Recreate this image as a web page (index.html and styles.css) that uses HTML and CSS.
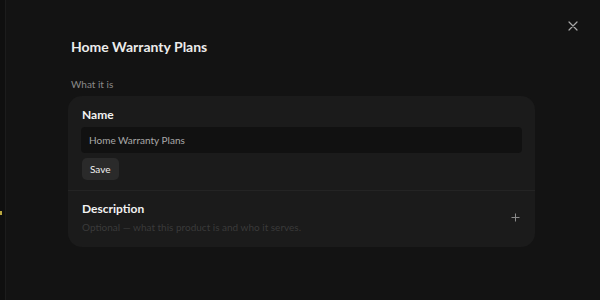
FILE: index.html
```html
<!DOCTYPE html>
<html>
<head>
<meta charset="utf-8">
<link rel="stylesheet" href="styles.css">
</head>
<body>
<div class="backdrop">
  <span class="dot"></span>
</div>
<div class="sheet">
  <button class="close" aria-label="Close">
    <svg width="10" height="10" viewBox="0 0 10 10"><path d="M1 1L9 9M9 1L1 9" stroke="#a8a8a8" stroke-width="1.2" stroke-linecap="round"/></svg>
  </button>
  <h1 class="title">Home Warranty Plans</h1>
  <div class="section-label">What it is</div>
  <div class="card">
    <div class="field">
      <div class="field-label">Name</div>
      <div class="input">Home Warranty Plans</div>
      <button class="save">Save</button>
    </div>
    <div class="field desc">
      <div class="desc-text">
        <div class="field-label">Description</div>
        <div class="placeholder">Optional — what this product is and who it serves.</div>
      </div>
      <svg class="plus" width="9" height="9" viewBox="0 0 9 9"><path d="M4.5 0.5V8.5M0.5 4.5H8.5" stroke="#8a8a8a" stroke-width="1"/></svg>
    </div>
  </div>
</div>
</body>
</html>
```
FILE: styles.css
```css
* { box-sizing: border-box; }
html, body { margin: 0; padding: 0; }
body {
  width: 600px;
  height: 300px;
  background: #0e0e0e;
  font-family: "Lato", "Noto Sans", sans-serif;
  display: flex;
  overflow: hidden;
}
.backdrop {
  width: 5px;
  flex: none;
  background: #0f0f0f;
  position: relative;
}
.dot {
  position: absolute;
  left: 0;
  top: 211px;
  width: 2px;
  height: 4px;
  background: #b9a640;
}
.sheet {
  flex: 1;
  background: #131313;
  border-left: 1px solid #1c1c1c;
  position: relative;
  padding: 37px 0 0 65px;
}
.close {
  position: absolute;
  top: 21px;
  right: 22px;
  width: 10px;
  height: 10px;
  padding: 0;
  border: 0;
  background: none;
  display: flex;
}
.title {
  margin: 0;
  font-size: 14px;
  font-weight: 700;
  color: #ececec;
  line-height: 20px;
}
.section-label {
  margin-top: 20px;
  font-size: 10px;
  color: #8a8a8a;
  line-height: 14px;
}
.card {
  margin-top: 5px;
  margin-left: -3px;
  width: 467px;
  background: #1b1b1b;
  border-radius: 14px;
}
.field {
  padding: 11px 14px 10px 14px;
}
.field + .field { border-top: 1px solid #242424; }
.field-label {
  font-size: 12px;
  font-weight: 700;
  color: #f2f2f2;
  line-height: 16px;
}
.input {
  margin-top: 4px;
  height: 26px;
  margin-right: -1px;
  margin-left: -1px;
  background: #111111;
  border-radius: 4px;
  padding: 0 8px;
  font-size: 10px;
  line-height: 26px;
  color: #a9a9a9;
}
.save {
  margin-top: 5px;
  height: 22px;
  padding: 0 8px;
  border: 0;
  border-radius: 5px;
  background: #2a2a2a;
  color: #f0f0f0;
  font-family: inherit;
  font-size: 10px;
  font-weight: 400;
}
.desc {
  display: flex;
  align-items: center;
  padding-top: 10px;
  padding-bottom: 13px;
}
.desc-text { flex: 1; }
.placeholder {
  margin-top: 3px;
  font-size: 10px;
  color: #3a3a3a;
  line-height: 14px;
}
.plus { margin-right: 1px; }
```
